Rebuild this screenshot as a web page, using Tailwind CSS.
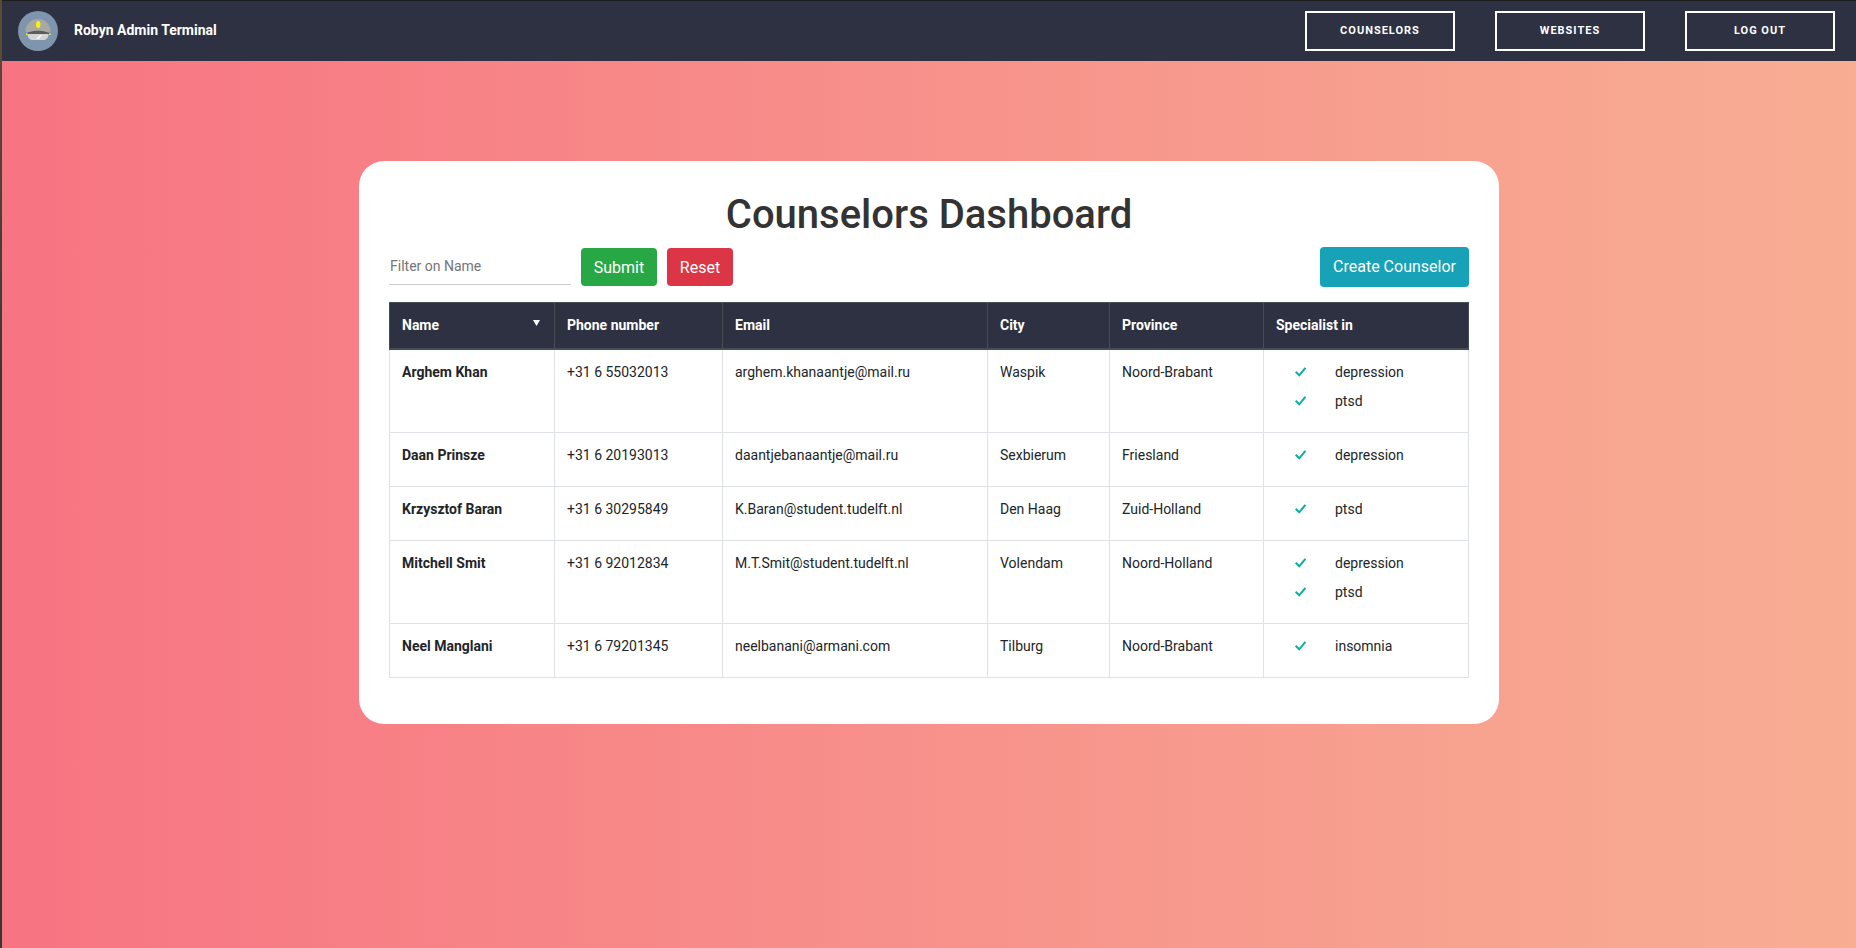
<!DOCTYPE html>
<html lang="en">
<head>
  <meta charset="UTF-8">
  <meta name="viewport" content="width=device-width, initial-scale=1.0">
  <title>Robyn Admin Terminal</title>
  <script src="https://cdn.jsdelivr.net/npm/@tailwindcss/browser@4"></script>
</head>
<body class="bg-[#333333] font-['Roboto',sans-serif] text-[14px] leading-[21px] text-[#212529] overflow-hidden">
  <div class="flex h-[948px]">
    <!-- strip of the desktop behind the window -->
    <div class="w-[2px] h-full shrink-0 bg-[linear-gradient(to_bottom,#5a4a36_5%,#383838_40%)]"></div>

    <div class="flex-1 flex flex-col min-w-0">
      <div class="h-px shrink-0 bg-[#1c1c1c]"></div>

      <!-- Navbar -->
      <nav class="h-[60px] shrink-0 bg-[#2d3142] flex items-center justify-between pl-[16px] pr-[21px]">
        <div class="flex items-center gap-[16px]">
          <svg width="40" height="40" viewBox="0 0 40 40">
            <circle cx="20" cy="20" r="20" fill="#7f95ae"/>
            <path d="M7.5 21 C7.5 12 14 8 20 8 C26 8 32.5 12 32.5 21 Z" fill="#a9a9a4"/>
            <ellipse cx="20.2" cy="13.5" rx="2.2" ry="3.5" fill="#f5f500"/>
            <path d="M8 23.5 C11 18.5 29 18.5 32 23.5 Z" fill="#5c5c5c"/>
            <path d="M9.5 23 H30.5 C30.5 27 28 29 25 29 H15 C12 29 9.5 27 9.5 23 Z" fill="#d4d4d4"/>
            <path d="M18 28 L22 24 H24.5 L20.5 28 Z" fill="#f4f4f4"/>
            <rect x="8" y="22.4" width="1.6" height="1.6" fill="#f5f500"/>
            <rect x="31" y="22.4" width="1.6" height="1.6" fill="#f5f500"/>
          </svg>
          <span class="font-bold text-[14px] text-white -mt-[2px]">Robyn Admin Terminal</span>
        </div>
        <div class="flex items-center gap-[40px]">
          <a class="w-[150px] h-[40px] border-2 border-white flex items-center justify-center text-white text-[11px] font-bold tracking-[1px] uppercase -mt-px">Counselors</a>
          <a class="w-[150px] h-[40px] border-2 border-white flex items-center justify-center text-white text-[11px] font-bold tracking-[1px] uppercase -mt-px">Websites</a>
          <a class="w-[150px] h-[40px] border-2 border-white flex items-center justify-center text-white text-[11px] font-bold tracking-[1px] uppercase -mt-px">Log out</a>
        </div>
      </nav>

      <!-- Page -->
      <main class="flex-1 bg-[linear-gradient(to_right,#f77482,#f8ae93)] pt-[100px]">
        <div class="w-[1140px] h-[563px] mx-auto bg-white rounded-[25px] px-[30px] pt-[30px]">
          <h1 class="text-[40px] leading-[48px] font-medium text-center text-[#333333]">Counselors Dashboard</h1>

          <div class="flex items-start justify-between h-[40px] mt-[8px] mb-[15px]">
            <div class="flex items-start">
              <input type="text" placeholder="Filter on Name" class="w-[182px] h-[38px] border-b border-[#cccccc] pl-[1px] text-[14px] outline-none placeholder:text-[#757575]">
              <button class="ml-[10px] mt-px h-[38px] w-[76px] rounded-[4px] bg-[#28a745] text-white text-[16px]">Submit</button>
              <button class="ml-[10px] mt-px h-[38px] w-[66px] rounded-[4px] bg-[#dc3545] text-white text-[16px]">Reset</button>
            </div>
            <button class="h-[40px] w-[149px] pb-[2px] rounded-[4px] bg-[#17a2b8] text-white text-[16px]">Create Counselor</button>
          </div>

          <table class="w-[1079px] table-fixed border-collapse">
            <colgroup>
              <col class="w-[165px]"><col class="w-[168px]"><col class="w-[265px]"><col class="w-[122px]"><col class="w-[154px]"><col class="w-[205px]">
            </colgroup>
            <thead class="bg-[#2d3142] text-white text-left">
              <tr>
                <th class="border border-[#454d55] border-b-2 p-[12px] font-bold">
                  <div class="flex justify-between">
                    <span>Name</span>
                    <svg class="mt-[5px] mr-[2px]" width="7" height="6" viewBox="0 0 7 6"><path d="M0 0H7L3.5 6Z" fill="#ffffff"/></svg>
                  </div>
                </th>
                <th class="border border-[#454d55] border-b-2 p-[12px] font-bold">Phone number</th>
                <th class="border border-[#454d55] border-b-2 p-[12px] font-bold">Email</th>
                <th class="border border-[#454d55] border-b-2 p-[12px] font-bold">City</th>
                <th class="border border-[#454d55] border-b-2 p-[12px] font-bold">Province</th>
                <th class="border border-[#454d55] border-b-2 p-[12px] font-bold">Specialist in</th>
              </tr>
            </thead>
            <tbody>
              <tr>
                <td class="border border-[#dee2e6] p-[12px] align-top font-bold">Arghem Khan</td>
                <td class="border border-[#dee2e6] p-[12px] align-top">+31 6 55032013</td>
                <td class="border border-[#dee2e6] p-[12px] align-top">arghem.khanaantje@mail.ru</td>
                <td class="border border-[#dee2e6] p-[12px] align-top">Waspik</td>
                <td class="border border-[#dee2e6] p-[12px] align-top">Noord-Brabant</td>
                <td class="border border-[#dee2e6] p-[12px] align-top">
                  <ul>
                    <li class="flex items-start h-[29px] pl-[19px]"><svg class="mt-[5px] mr-[29px]" width="11" height="10" viewBox="0 0 11 10"><path d="M0.7 4.8 L4.2 8.3 L10.4 0.8" fill="none" stroke="#0aaea3" stroke-width="2"/></svg>depression</li>
                    <li class="flex items-start h-[29px] pl-[19px]"><svg class="mt-[5px] mr-[29px]" width="11" height="10" viewBox="0 0 11 10"><path d="M0.7 4.8 L4.2 8.3 L10.4 0.8" fill="none" stroke="#0aaea3" stroke-width="2"/></svg>ptsd</li>
                  </ul>
                </td>
              </tr>
              <tr>
                <td class="border border-[#dee2e6] p-[12px] align-top font-bold">Daan Prinsze</td>
                <td class="border border-[#dee2e6] p-[12px] align-top">+31 6 20193013</td>
                <td class="border border-[#dee2e6] p-[12px] align-top">daantjebanaantje@mail.ru</td>
                <td class="border border-[#dee2e6] p-[12px] align-top">Sexbierum</td>
                <td class="border border-[#dee2e6] p-[12px] align-top">Friesland</td>
                <td class="border border-[#dee2e6] p-[12px] align-top">
                  <ul>
                    <li class="flex items-start h-[29px] pl-[19px]"><svg class="mt-[5px] mr-[29px]" width="11" height="10" viewBox="0 0 11 10"><path d="M0.7 4.8 L4.2 8.3 L10.4 0.8" fill="none" stroke="#0aaea3" stroke-width="2"/></svg>depression</li>
                  </ul>
                </td>
              </tr>
              <tr>
                <td class="border border-[#dee2e6] p-[12px] align-top font-bold">Krzysztof Baran</td>
                <td class="border border-[#dee2e6] p-[12px] align-top">+31 6 30295849</td>
                <td class="border border-[#dee2e6] p-[12px] align-top">K.Baran@student.tudelft.nl</td>
                <td class="border border-[#dee2e6] p-[12px] align-top">Den Haag</td>
                <td class="border border-[#dee2e6] p-[12px] align-top">Zuid-Holland</td>
                <td class="border border-[#dee2e6] p-[12px] align-top">
                  <ul>
                    <li class="flex items-start h-[29px] pl-[19px]"><svg class="mt-[5px] mr-[29px]" width="11" height="10" viewBox="0 0 11 10"><path d="M0.7 4.8 L4.2 8.3 L10.4 0.8" fill="none" stroke="#0aaea3" stroke-width="2"/></svg>ptsd</li>
                  </ul>
                </td>
              </tr>
              <tr>
                <td class="border border-[#dee2e6] p-[12px] align-top font-bold">Mitchell Smit</td>
                <td class="border border-[#dee2e6] p-[12px] align-top">+31 6 92012834</td>
                <td class="border border-[#dee2e6] p-[12px] align-top">M.T.Smit@student.tudelft.nl</td>
                <td class="border border-[#dee2e6] p-[12px] align-top">Volendam</td>
                <td class="border border-[#dee2e6] p-[12px] align-top">Noord-Holland</td>
                <td class="border border-[#dee2e6] p-[12px] align-top">
                  <ul>
                    <li class="flex items-start h-[29px] pl-[19px]"><svg class="mt-[5px] mr-[29px]" width="11" height="10" viewBox="0 0 11 10"><path d="M0.7 4.8 L4.2 8.3 L10.4 0.8" fill="none" stroke="#0aaea3" stroke-width="2"/></svg>depression</li>
                    <li class="flex items-start h-[29px] pl-[19px]"><svg class="mt-[5px] mr-[29px]" width="11" height="10" viewBox="0 0 11 10"><path d="M0.7 4.8 L4.2 8.3 L10.4 0.8" fill="none" stroke="#0aaea3" stroke-width="2"/></svg>ptsd</li>
                  </ul>
                </td>
              </tr>
              <tr>
                <td class="border border-[#dee2e6] p-[12px] align-top font-bold">Neel Manglani</td>
                <td class="border border-[#dee2e6] p-[12px] align-top">+31 6 79201345</td>
                <td class="border border-[#dee2e6] p-[12px] align-top">neelbanani@armani.com</td>
                <td class="border border-[#dee2e6] p-[12px] align-top">Tilburg</td>
                <td class="border border-[#dee2e6] p-[12px] align-top">Noord-Brabant</td>
                <td class="border border-[#dee2e6] p-[12px] align-top">
                  <ul>
                    <li class="flex items-start h-[29px] pl-[19px]"><svg class="mt-[5px] mr-[29px]" width="11" height="10" viewBox="0 0 11 10"><path d="M0.7 4.8 L4.2 8.3 L10.4 0.8" fill="none" stroke="#0aaea3" stroke-width="2"/></svg>insomnia</li>
                  </ul>
                </td>
              </tr>
            </tbody>
          </table>
        </div>
      </main>
    </div>
  </div>
</body>
</html>
